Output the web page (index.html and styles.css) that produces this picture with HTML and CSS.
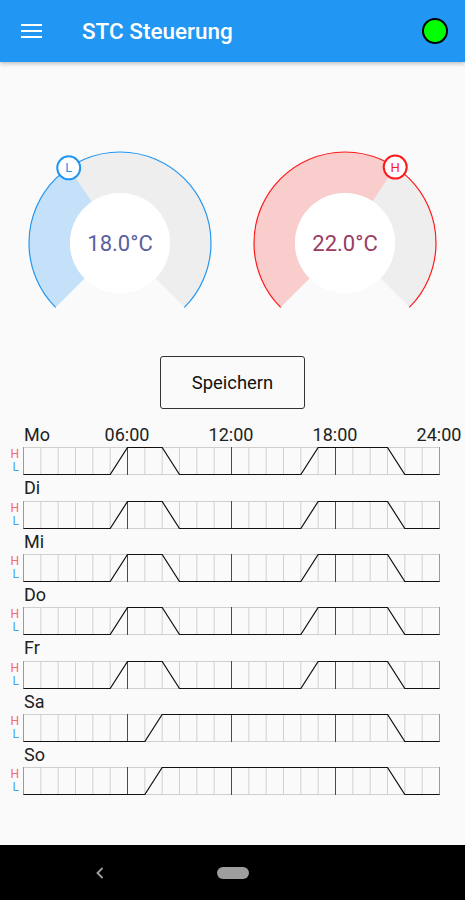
FILE: index.html
```html
<!DOCTYPE html>
<html lang="de">
<head>
  <meta charset="UTF-8" />
  <title>STC Steuerung</title>
  <link rel="stylesheet" href="styles.css">
</head>
<body>
  <header class="appbar">
    <div class="menu"><span></span><span></span><span></span></div>
    <h1 class="title">STC Steuerung</h1>
    <div class="status"></div>
  </header>

  <main class="content">
    <div class="gauges">
      <svg class="gauge" width="200" height="170" viewBox="0 0 200 170">
        <path class="track" d="M35.65 167.35 A91 91 0 1 1 164.35 167.35 L135.36 138.36 A50 50 0 1 0 64.64 138.36 Z"/>
        <path class="fill-low" d="M35.65 167.35 A91 91 0 0 1 48.72 27.82 L71.83 61.70 A50 50 0 0 0 64.64 138.36 Z"/>
        <path class="rim rim-low" d="M35.65 167.35 A91 91 0 1 1 164.35 167.35"/>
        <circle class="hub" cx="100" cy="103" r="50"/>
        <text class="temp temp-low" x="100" y="111">18.0°C</text>
        <circle class="knob knob-low" cx="48.72" cy="27.82" r="11.5"/>
        <text class="knob-label knob-label-low" x="48.72" y="32.4">L</text>
      </svg>
      <svg class="gauge" width="200" height="170" viewBox="0 0 200 170">
        <path class="track" d="M35.65 167.35 A91 91 0 1 1 164.35 167.35 L135.36 138.36 A50 50 0 1 0 64.64 138.36 Z"/>
        <path class="fill-high" d="M35.65 167.35 A91 91 0 0 1 150.22 27.12 L127.6 61.3 A50 50 0 0 0 64.64 138.36 Z"/>
        <path class="rim rim-high" d="M35.65 167.35 A91 91 0 1 1 164.35 167.35"/>
        <circle class="hub" cx="100" cy="103" r="50"/>
        <text class="temp temp-high" x="100" y="111">22.0°C</text>
        <circle class="knob knob-high" cx="150.22" cy="27.12" r="11.5"/>
        <text class="knob-label knob-label-high" x="150.22" y="31.7">H</text>
      </svg>
    </div>

    <button class="save">Speichern</button>

    <div class="schedule">
      <div class="day">
        <div class="day-head">
          <span class="day-name">Mo</span>
          <span class="tick c1">06:00</span>
          <span class="tick c2">12:00</span>
          <span class="tick c3">18:00</span>
          <span class="tick c4">24:00</span>
        </div>
        <div class="day-body">
          <div class="hl"><span class="h">H</span><span class="l">L</span></div>
          <svg class="chart" data-plan="week" width="418" height="28"></svg>
        </div>
      </div>
      <div class="day">
        <div class="day-head"><span class="day-name">Di</span></div>
        <div class="day-body">
          <div class="hl"><span class="h">H</span><span class="l">L</span></div>
          <svg class="chart" data-plan="week" width="418" height="28"></svg>
        </div>
      </div>
      <div class="day">
        <div class="day-head"><span class="day-name">Mi</span></div>
        <div class="day-body">
          <div class="hl"><span class="h">H</span><span class="l">L</span></div>
          <svg class="chart" data-plan="week" width="418" height="28"></svg>
        </div>
      </div>
      <div class="day">
        <div class="day-head"><span class="day-name">Do</span></div>
        <div class="day-body">
          <div class="hl"><span class="h">H</span><span class="l">L</span></div>
          <svg class="chart" data-plan="week" width="418" height="28"></svg>
        </div>
      </div>
      <div class="day">
        <div class="day-head"><span class="day-name">Fr</span></div>
        <div class="day-body">
          <div class="hl"><span class="h">H</span><span class="l">L</span></div>
          <svg class="chart" data-plan="week" width="418" height="28"></svg>
        </div>
      </div>
      <div class="day">
        <div class="day-head"><span class="day-name">Sa</span></div>
        <div class="day-body">
          <div class="hl"><span class="h">H</span><span class="l">L</span></div>
          <svg class="chart" data-plan="weekend" width="418" height="28"></svg>
        </div>
      </div>
      <div class="day">
        <div class="day-head"><span class="day-name">So</span></div>
        <div class="day-body">
          <div class="hl"><span class="h">H</span><span class="l">L</span></div>
          <svg class="chart" data-plan="weekend" width="418" height="28"></svg>
        </div>
      </div>
    </div>
  </main>

  <nav class="navbar">
    <svg class="back" width="8" height="12" viewBox="0 0 8 12">
      <polyline points="6.5,1 1.5,6 6.5,11"/>
    </svg>
    <span class="home"></span>
  </nav>

  <script>
    // hour -> 0 (L) / 1 (H)
    const plans = {
      week: [[0,0],[5,0],[6,1],[8,1],[9,0],[16,0],[17,1],[21,1],[22,0],[24,0]],
      weekend: [[0,0],[7,0],[8,1],[21,1],[22,0],[24,0]]
    };
    const step = 416 / 24;
    const xOf = h => (0.5 + h * step).toFixed(2);

    document.querySelectorAll(".chart").forEach(svg => {
      let s = '<line class="edge" x1="0" y1="0.5" x2="417" y2="0.5"/>';
      s += '<line class="edge" x1="0" y1="27.5" x2="417" y2="27.5"/>';
      for (let h = 0; h <= 24; h++) {
        let cls = "grid";
        if (h % 6 === 0) cls = "grid major";
        if (h === 0 || h === 24) cls = "grid outer";
        s += '<line class="' + cls + '" x1="' + xOf(h) + '" y1="0" x2="' + xOf(h) + '" y2="28"/>';
      }
      const pts = plans[svg.dataset.plan].map(p => xOf(p[0]) + "," + (p[1] ? 0.5 : 27.5)).join(" ");
      s += '<polyline class="profile" points="' + pts + '"/>';
      svg.innerHTML = s;
    });
  </script>
</body>
</html>
```

FILE: styles.css
```css
body {
  margin: 0;
  height: 900px;
  display: flex;
  flex-direction: column;
  background: #fafafa;
  font-family: Roboto, "Noto Sans", sans-serif;
  color: #212121;
}

.appbar {
  height: 62px;
  flex-shrink: 0;
  display: flex;
  align-items: center;
  background: #2196f3;
  box-shadow: 0 2px 4px rgba(0, 0, 0, 0.22);
  position: relative;
  z-index: 1;
}
.menu {
  width: 21px;
  margin-left: 21px;
  display: flex;
  flex-direction: column;
  gap: 4px;
}
.menu span {
  height: 2px;
  background: #fff;
}
.title {
  margin: 0 0 0 40px;
  font-size: 22.5px;
  font-weight: 500;
  color: #fff;
}
.status {
  margin-left: auto;
  margin-right: 17px;
  width: 22px;
  height: 22px;
  border: 2px solid #000;
  border-radius: 50%;
  background: #00ff00;
}

.content {
  flex: 1;
}

.gauges {
  display: grid;
  grid-template-columns: 200px 200px;
  gap: 25px;
  padding: 78px 20px 0;
}
.gauge {
  display: block;
}
.track {
  fill: #eeeeee;
}
.fill-low {
  fill: #c5e1f9;
}
.fill-high {
  fill: #f8cdcb;
}
.rim {
  fill: none;
  stroke-width: 1.2;
}
.rim-low {
  stroke: #2196f3;
}
.rim-high {
  stroke: #ff1a1a;
}
.hub {
  fill: #fff;
}
.temp {
  font-size: 22px;
  text-anchor: middle;
}
.temp-low {
  fill: #5a5fa2;
}
.temp-high {
  fill: #9a3b62;
}
.knob {
  fill: #fff;
  stroke-width: 2;
}
.knob-low {
  stroke: #2196f3;
}
.knob-high {
  stroke: #ff1a1a;
}
.knob-label {
  font-size: 13px;
  text-anchor: middle;
}
.knob-label-low {
  fill: #2196f3;
}
.knob-label-high {
  fill: #ff1a1a;
}

.save {
  display: block;
  margin: 46px auto 0;
  width: 145px;
  height: 53px;
  border: 1px solid #333;
  border-radius: 3px;
  background: transparent;
  font-family: Roboto, "Noto Sans", sans-serif;
  font-size: 18.4px;
  font-weight: 400;
  color: #111;
}

.schedule {
  margin-top: 15px;
}
.day {
  height: 53.333px;
}
.day-head {
  display: grid;
  grid-template-columns: repeat(4, 104px);
  padding-left: 23px;
  height: 21px;
  margin-bottom: 2.3px;
  font-size: 18px;
  line-height: 21px;
}
.day-name {
  grid-row: 1;
  grid-column: 1;
  padding-left: 1px;
}
.tick {
  grid-row: 1;
  justify-self: end;
  transform: translateX(50%);
}
.c1 { grid-column: 1; }
.c2 { grid-column: 2; }
.c3 { grid-column: 3; }
.c4 { grid-column: 4; }

.day-body {
  display: flex;
}
.hl {
  width: 23px;
  box-sizing: border-box;
  padding: 1px 4px 0 0;
  display: flex;
  flex-direction: column;
  align-items: flex-end;
  font-size: 12px;
  line-height: 13px;
}
.hl .h {
  color: #f46a6a;
}
.hl .l {
  color: #4aa3f0;
}
.chart {
  display: block;
}
.chart .edge {
  stroke: #cfcfcf;
}
.chart .grid {
  stroke: #d0d0d0;
}
.chart .major {
  stroke: #4a4a4a;
}
.chart .outer {
  stroke: #9a9a9a;
}
.chart .profile {
  fill: none;
  stroke: #111;
  stroke-width: 1.2;
}

.navbar {
  height: 55px;
  flex-shrink: 0;
  display: flex;
  align-items: center;
  padding-left: 96px;
  background: #000;
}
.back polyline {
  fill: none;
  stroke: #a0a0a0;
  stroke-width: 1.8;
}
.home {
  margin-left: 113px;
  width: 32px;
  height: 12px;
  border-radius: 6px;
  background: #9e9e9e;
}
```
